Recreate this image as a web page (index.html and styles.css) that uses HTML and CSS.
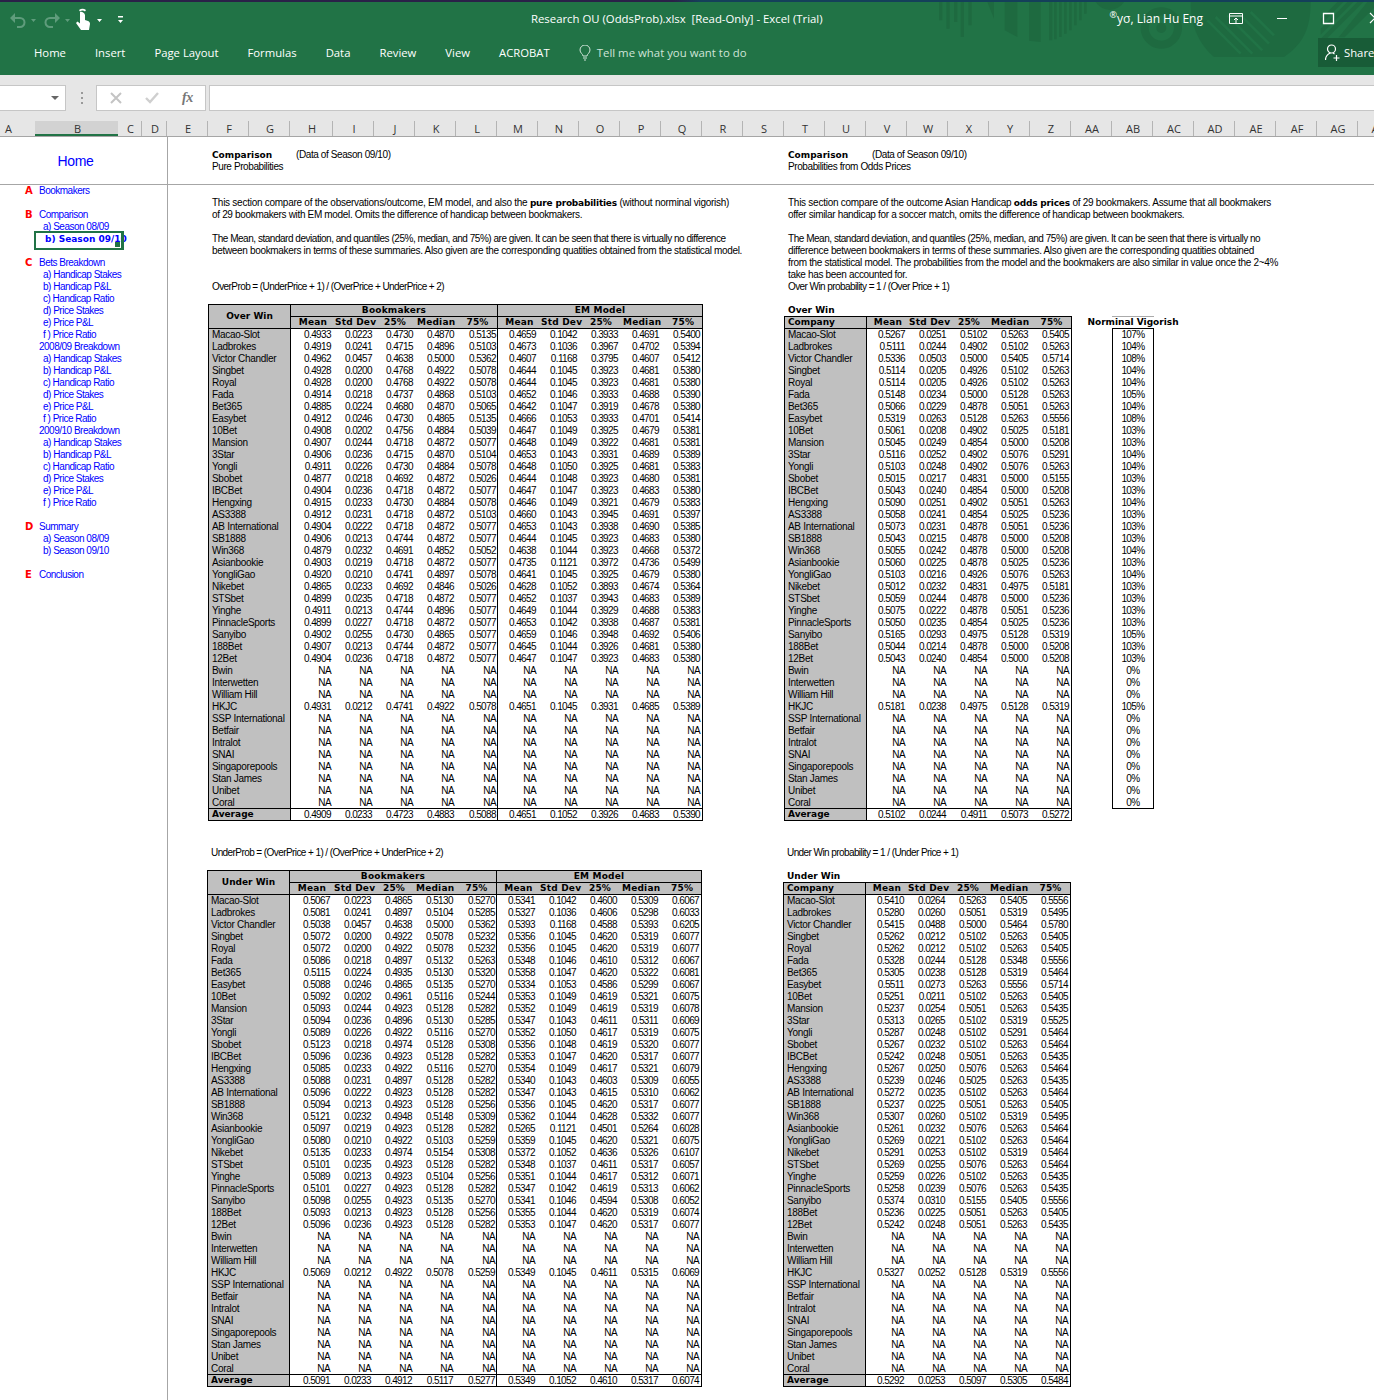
FILE: index.html
```html
<!DOCTYPE html>
<html lang="en">
<head>
    <meta charset="UTF-8">
    <meta name="viewport" content="width=device-width, initial-scale=1.0">
    <title>Research OU (OddsProb).xlsx - Excel</title>
    <link rel="stylesheet" href="styles.css">
</head>
<body>
    <header class="ribbon">
        <svg class="ribbon-art" width="460" height="75" viewBox="0 0 1380 225" fill="#1e6a40">
            <path d="M75 0h10v55H75zM97 0h10v80H97zM120 0h10v60h-10zM140 0h10v105h-10zM163 0h10v70h-10zM220 0h20v50zM272 0h38v105l-38-20zM345 0h35v120l-35-4zM405 0h10v115h-10zM420 0h8v112h-8zM435 0h8v105h-8zM450 0h8v95h-8zM465 0h8v85h-8zM480 0h8v70h-8zM495 0h8v55h-8zM510 0h8v35h-8z"/>
            <path d="M545 0h85a50 50 0 0 1-85 0z"/>
            <path fill-rule="evenodd" d="M742 16a62 62 0 1 1-.1 0zM742 40a38 38 0 1 0 .1 0zM742 63a15 15 0 1 1-.1 0z"/>
            <path d="M830 0h360c0 90-30 130-80 165H900c-40-35-70-85-70-165z"/>
            <path stroke="#217346" stroke-width="8" d="M880 55l100 100M905 45l110 110M940 40l105 105M975 35l90 90M1010 30l70 70"/>
            <path d="M1270 0h18l-68 68V50zM1300 0h18l-98 98V80zM1330 0h18l-128 128v-18zM1360 0h20v18l-88 88h-18z"/>
        </svg>
        <div class="title-row">
            <svg class="qat" width="130" height="35" viewBox="0 0 130 35">
                <g fill="none" stroke="#5f9c7c" stroke-width="2">
                    <path d="M13 16h7a4.500 4.500 0 0 1 0 9h-3"/>
                    <path d="M57 16h-7a4.500 4.500 0 0 0 0 9h3"/>
                </g>
                <path fill="#5f9c7c" d="M10 16l5-5v10zM60 16l-5-5v10zM31 17h5l-2.500 3zM65 17h5l-2.500 3z"/>
                <path fill="#fff" d="M80 10a4 4 0 0 1 5 3v5l3 1c1.500.5 2 1.500 2 3l-1 6h-8l-5-7 1.500-1.500 2.500 2zM79 8a6 6 0 0 1 7 0l-1 1.500a4 4 0 0 0-5 0z"/>
                <path fill="#fff" d="M97 17h5l-2.500 3zM118 14h5v1.500h-5zM118 18h5l-2.500 3z"/>
            </svg>
            <span class="doc-title">Research OU (OddsProb).xlsx &nbsp;[Read-Only] - Excel (Trial)</span>
            <div class="account">
                <span class="user"><sup>®</sup>yσ, Lian Hu Eng</span>
                <svg width="145" height="35" viewBox="0 0 145 35" fill="none" stroke="#fff">
                    <path d="M.5 11.500h13v10H.5zM.5 14h13M7 21v-5M5 18l2-2 2 2"/>
                    <path d="M48 16.500h10"/>
                    <path stroke-width="1.300" d="M94.500 11.500h10v10h-10z"/>
                    <path stroke-width="1.200" d="M141 11l5 5-5 5"/>
                </svg>
            </div>
        </div>
        <nav class="tab-row">
            <span class="tab">Home</span>
            <span class="tab">Insert</span>
            <span class="tab">Page Layout</span>
            <span class="tab">Formulas</span>
            <span class="tab">Data</span>
            <span class="tab">Review</span>
            <span class="tab">View</span>
            <span class="tab">ACROBAT</span>
            <span class="tell-me">
                <svg width="12" height="16" viewBox="0 0 12 16" fill="none" stroke="#cfe4d8">
                    <path d="M4 11c0-2-3-3-3-6a5 5 0 0 1 10 0c0 3-3 4-3 6zM4 13h4M5 15h2"/>
                </svg>
                Tell me what you want to do
            </span>
            <span class="share">
                <svg width="15" height="17" viewBox="0 0 15 17" fill="none" stroke="#fff" stroke-width="1.200">
                    <circle cx="6.500" cy="5" r="4"/>
                    <path d="M.5 16c0-4 2.500-6 5-7M8 9l1.500 1M8.500 14h6M11.500 11v6"/>
                </svg>
                Share
            </span>
        </nav>
    </header>

    <div class="formula-bar">
        <div class="name-box"><i class="caret"></i></div>
        <div class="grip"><i></i><i></i><i></i></div>
        <div class="fx-box">
            <svg width="12" height="12" viewBox="0 0 12 12" fill="none" stroke="#c4c4c4" stroke-width="2"><path d="M1 1l10 10M11 1L1 11"/></svg>
            <svg width="14" height="12" viewBox="0 0 14 12" fill="none" stroke="#cfcfcf" stroke-width="2.400"><path d="M1 6l4 4 8-9"/></svg>
            <span class="fx">fx</span>
        </div>
        <div class="formula-input"></div>
    </div>

    <div class="col-heads">
        <span class="col-a">A</span><span class="col-b">B</span><span class="col-c">C</span><span class="col-d">D</span><span>E</span><span>F</span><span>G</span><span class="col-h">H</span><span>I</span><span>J</span><span>K</span><span>L</span><span>M</span><span>N</span><span>O</span><span>P</span><span>Q</span><span>R</span><span>S</span><span>T</span><span>U</span><span>V</span><span>W</span><span>X</span><span>Y</span><span>Z</span><span>AA</span><span>AB</span><span>AC</span><span>AD</span><span>AE</span><span>AF</span><span>AG</span><span>AH</span>
    </div>

    <main class="sheet">
        <div class="home-pane"><a class="home-link">Home</a></div>

        <div class="top-pane">
            <div class="sec-left">
                <div class="line"><b class="heading">Comparison</b>(Data of Season 09/10)</div>
                <div class="line">Pure Probabilities</div>
            </div>
            <div class="sec-right">
                <div class="line"><b class="heading">Comparison</b>(Data of Season 09/10)</div>
                <div class="line">Probabilities from Odds Prices</div>
            </div>
        </div>

        <aside class="nav-pane">
            <div class="nav-row"><b class="letter">A</b><a>Bookmakers</a></div>
            <div class="nav-row"></div>
            <div class="nav-row"><b class="letter">B</b><a>Comparison</a></div>
            <div class="nav-row sub"><a>a) Season 08/09</a></div>
            <div class="nav-row sub selected"><a>b) Season 09/10</a></div>
            <div class="nav-row"></div>
            <div class="nav-row"><b class="letter">C</b><a>Bets Breakdown</a></div>
            <div class="nav-row sub"><a>a) Handicap Stakes</a></div>
            <div class="nav-row sub"><a>b) Handicap P&amp;L</a></div>
            <div class="nav-row sub"><a>c) Handicap Ratio</a></div>
            <div class="nav-row sub"><a>d) Price Stakes</a></div>
            <div class="nav-row sub"><a>e) Price P&amp;L</a></div>
            <div class="nav-row sub"><a>f ) Price Ratio</a></div>
            <div class="nav-row year"><a>2008/09 Breakdown</a></div>
            <div class="nav-row sub"><a>a) Handicap Stakes</a></div>
            <div class="nav-row sub"><a>b) Handicap P&amp;L</a></div>
            <div class="nav-row sub"><a>c) Handicap Ratio</a></div>
            <div class="nav-row sub"><a>d) Price Stakes</a></div>
            <div class="nav-row sub"><a>e) Price P&amp;L</a></div>
            <div class="nav-row sub"><a>f ) Price Ratio</a></div>
            <div class="nav-row year"><a>2009/10 Breakdown</a></div>
            <div class="nav-row sub"><a>a) Handicap Stakes</a></div>
            <div class="nav-row sub"><a>b) Handicap P&amp;L</a></div>
            <div class="nav-row sub"><a>c) Handicap Ratio</a></div>
            <div class="nav-row sub"><a>d) Price Stakes</a></div>
            <div class="nav-row sub"><a>e) Price P&amp;L</a></div>
            <div class="nav-row sub"><a>f ) Price Ratio</a></div>
            <div class="nav-row"></div>
            <div class="nav-row"><b class="letter">D</b><a>Summary</a></div>
            <div class="nav-row sub"><a>a) Season 08/09</a></div>
            <div class="nav-row sub"><a>b) Season 09/10</a></div>
            <div class="nav-row"></div>
            <div class="nav-row"><b class="letter">E</b><a>Conclusion</a></div>
        </aside>

        <div class="main-pane">
            <section class="sec-left">
                <div class="intro">
                    <div class="line loose">This section compare of the observations/outcome, EM model, and also the <b>pure probabilities</b> (without norminal vigorish)</div>
                    <div class="line">of 29 bookmakers with EM model. Omits the difference of handicap between bookmakers.</div>
                    <div class="line"></div>
                    <div class="line tight">The Mean, standard deviation, and quantiles (25%, median, and 75%) are given. It can be seen that there is virtually no difference</div>
                    <div class="line">between bookmakers in terms of these summaries. Also given are the corresponding quatities obtained from the statistical model.</div>
                    <div class="line"></div>
                    <div class="line"></div>
                    <div class="line formula">OverProb = (UnderPrice + 1) / (OverPrice + UnderPrice + 2)</div>
                </div>
                <table class="data-table wide" id="overPure"></table>
                <div class="lower">
                    <div class="line formula">UnderProb = (OverPrice + 1) / (OverPrice + UnderPrice + 2)</div>
                    <table class="data-table wide" id="underPure"></table>
                </div>
            </section>

            <section class="sec-right">
                <div class="intro">
                    <div class="line loose">This section compare of the outcome Asian Handicap <b>odds prices</b> of 29 bookmakers. Assume that all bookmakers</div>
                    <div class="line">offer similar handicap for a soccer match, omits the difference of handicap between bookmakers.</div>
                    <div class="line"></div>
                    <div class="line tight">The Mean, standard deviation, and quantiles (25%, median, and 75%) are given. It can be seen that there is virtually no</div>
                    <div class="line">difference between bookmakers in terms of these summaries. Also given are the corresponding quatities obtained</div>
                    <div class="line">from the statistical model. The probabilities from the model and the bookmakers are also similar in value once the 2~4%</div>
                    <div class="line">take has been accounted for.</div>
                    <div class="line formula">Over Win probability = 1 / (Over Price + 1)</div>
                </div>
                <h3 class="table-title">Over Win</h3>
                <div class="table-row">
                    <table class="data-table narrow" id="overOdds"></table>
                    <div class="vig">
                        <div class="vig-head"><b>Norminal Vigorish</b></div>
                        <div class="vig-body" id="vigBody"></div>
                    </div>
                </div>
                <div class="lower">
                    <div class="line formula">Under Win probability = 1 / (Under Price + 1)</div>
                    <h3 class="table-title">Under Win</h3>
                    <table class="data-table narrow" id="underOdds"></table>
                </div>
            </section>
        </div>
    </main>

    <script src="tables.js"></script>
</body>
</html>
```

FILE: styles.css
```css
* {
    box-sizing: border-box;
}
body {
    margin: 0;
    width: 1374px;
    height: 1400px;
    overflow: hidden;
    background-color: #fff;
    color: #000;
    font-family: "Liberation Sans", Arial, sans-serif;
    font-size: 10px;
    letter-spacing: -0.5px;
}

/* title bar and tabs */
.ribbon {
    position: relative;
    height: 75px;
    overflow: hidden;
    background-color: #217346;
    border-top: 2px solid;
    border-image: linear-gradient(90deg, #2a2048 0, #2a2048 49%, #14405a 51%, #14405a 100%) 1;
    color: #fff;
    font-family: "Open Sans", sans-serif;
    font-size: 11.3px;
    letter-spacing: 0;
}
.ribbon-art {
    position: absolute;
    left: 914px;
    top: 0;
}
.title-row {
    position: relative;
    display: flex;
    height: 36px;
    align-items: flex-start;
}
.doc-title {
    margin-left: 401px;
    font-size: 11.35px;
    line-height: 33px;
    white-space: nowrap;
}
.account {
    margin-left: auto;
    display: flex;
    align-items: flex-start;
    gap: 26px;
}
.user {
    font-size: 12px;
    line-height: 33px;
    white-space: nowrap;
}
.user sup {
    font-size: 9px;
    line-height: 0;
}
.tab-row {
    position: relative;
    display: flex;
    height: 29px;
    align-items: center;
    padding-left: 34px;
    gap: 29px;
}
.tab {
    white-space: nowrap;
}
.tell-me {
    display: flex;
    align-items: center;
    gap: 6px;
    color: #cfe4d8;
    font-size: 11.4px;
    white-space: nowrap;
}
.share {
    display: flex;
    align-items: center;
    gap: 4px;
    margin-left: auto;
    width: 56px;
    height: 29px;
    flex-shrink: 0;
    overflow: hidden;
    padding-left: 7px;
    background-color: #185c37;
}
.share svg {
    flex-shrink: 0;
}

/* formula bar */
.formula-bar {
    display: flex;
    height: 46px;
    padding-top: 10px;
    align-items: flex-start;
    background-color: #e6e6e6;
}
.name-box, .fx-box, .formula-input {
    height: 26px;
    background-color: #fff;
    border: 1px solid #c6c6c6;
}
.name-box {
    position: relative;
    width: 66px;
    border-left: none;
}
.caret {
    position: absolute;
    left: 51px;
    top: 10px;
    border: 4px solid transparent;
    border-top-color: #666;
}
.grip {
    display: flex;
    flex-direction: column;
    width: 30px;
    height: 26px;
    padding: 7px 0 0 15px;
    gap: 3px;
}
.grip i {
    width: 2px;
    height: 2px;
    background-color: #999;
}
.fx-box {
    display: flex;
    align-items: center;
    width: 110px;
    padding-left: 13px;
}
.fx-box svg + svg {
    margin-left: 23px;
}
.fx {
    margin-left: 23px;
    color: #777;
    font-family: "Liberation Serif", serif;
    font-size: 14px;
    font-style: italic;
    font-weight: bold;
}
.formula-input {
    flex: 1;
    margin-left: 3px;
    border-right: none;
}

/* column letters */
.col-heads {
    display: flex;
    height: 16px;
    overflow: hidden;
    background-color: #e6e6e6;
    border-bottom: 1px solid #a6a6a6;
    color: #333;
    font-family: "Open Sans", sans-serif;
    font-size: 11px;
    letter-spacing: 0;
    line-height: 15px;
}
.col-heads span {
    flex: 0 0 41px;
    padding-left: 2px;
    text-align: center;
    border-right: 1px solid #b4b4b4;
}
.col-heads .col-a {
    flex-basis: 35px;
    padding-left: 5px;
    text-align: left;
    border-right: none;
}
.col-heads .col-b {
    flex-basis: 83px;
    height: 15px;
    background-color: #d2d2d2;
    border-bottom: 2px solid #217346;
    border-right: none;
}
.col-heads .col-c {
    flex-basis: 24px;
}
.col-heads .col-d {
    flex-basis: 25px;
}
.col-heads .col-h {
    flex-basis: 43px;
}

/* sheet panes */
.sheet {
    display: grid;
    grid-template-columns: 168px 1fr;
    grid-template-rows: 48px 1fr;
}
.home-pane {
    padding-left: 34px;
    width: 168px;
    border-right: 1px solid #a6a6a6;
    border-bottom: 1px solid #a6a6a6;
}
.home-link {
    display: block;
    width: 83px;
    color: #0000ff;
    font-size: 14px;
    letter-spacing: -0.3px;
    line-height: 48px;
    text-align: center;
}
.top-pane {
    display: grid;
    grid-template-columns: 616px 1fr;
    padding-top: 12px;
    border-bottom: 1px solid #a6a6a6;
}
.top-pane .line {
    letter-spacing: -0.4px;
}
.heading {
    display: inline-block;
    width: 84px;
}
b {
    font-family: "DejaVu Sans", sans-serif;
    font-size: 9px;
    letter-spacing: 0;
}
.line {
    height: 12px;
    line-height: 12px;
    letter-spacing: -0.33px;
    white-space: nowrap;
}
.intro .line b {
    letter-spacing: -0.2px;
}
.line.loose {
    letter-spacing: -0.26px;
}
.line.tight {
    letter-spacing: -0.47px;
}
.line.formula {
    letter-spacing: -0.58px;
}
.nav-pane {
    height: 1215px;
    border-right: 1px solid #a6a6a6;
}
.nav-row {
    position: relative;
    display: flex;
    height: 12px;
    padding-left: 25px;
    line-height: 12px;
    white-space: nowrap;
    color: #0000ff;
}
.nav-row.sub {
    padding-left: 43px;
}
.nav-row.year {
    padding-left: 39px;
}
.letter {
    width: 14px;
    color: #ff0000;
    font-size: 10px;
}
.nav-row.selected {
    padding-left: 45px;
    font-family: "DejaVu Sans", sans-serif;
    font-size: 9px;
    font-weight: bold;
    letter-spacing: 0;
}
.nav-row.selected::after {
    content: "";
    position: absolute;
    left: 34px;
    top: -2px;
    width: 85px;
    height: 15px;
    border: 2px solid #217346;
    border-right-width: 3px;
}
.nav-row.selected::before {
    content: "";
    position: absolute;
    z-index: 1;
    left: 115px;
    top: 9px;
    width: 5px;
    height: 5px;
    background-color: #217346;
}
.main-pane {
    display: grid;
    grid-template-columns: 616px 1fr;
    align-items: start;
}
.sec-left {
    padding-left: 40px;
}
.sec-right {
    padding-left: 0;
}
.sec-left .line, .sec-right .line {
    padding-left: 4px;
}
.intro {
    padding-top: 12px;
}
.lower {
    margin-left: -1px;
    padding-top: 26px;
}

/* tables */
.data-table {
    table-layout: fixed;
    border-collapse: separate;
    border-spacing: 0;
    border: 1px solid #000;
    line-height: 11px;
    letter-spacing: -0.6px;
}
.data-table.wide {
    width: 495px;
    margin-top: 11px;
}
.data-table.narrow {
    width: 288px;
}
.data-table th, .data-table td {
    height: 12px;
    padding: 0;
    white-space: nowrap;
    overflow: visible;
}
.data-table th {
    padding-left: 3px;
    background-color: #c0c0c0;
    font-family: "DejaVu Sans", sans-serif;
    font-size: 9px;
    font-weight: bold;
    letter-spacing: 0.2px;
    text-align: center;
    border-bottom: 1px solid #000;
}
.data-table th.group {
    padding-left: 0;
}
.data-table th.name-head {
    padding-left: 0;
    letter-spacing: 0;
    border-right: 1px solid #000;
}
.data-table th.company {
    padding-left: 3px;
    text-align: left;
}
.data-table td {
    padding-right: 1px;
    text-align: right;
    vertical-align: top;
}
.data-table td.name {
    padding: 0 0 0 3px;
    background-color: #c0c0c0;
    text-align: left;
    letter-spacing: -0.3px;
    border-right: 1px solid #000;
}
.data-table td.em, .data-table td.last {
    padding-right: 2px;
}
.data-table .split {
    border-right: 1px solid #000;
}
.data-table tr.final-row td {
    border-bottom: 1px solid #000;
}
.data-table tr.avg-row td {
    height: 11px;
}
.data-table tr.avg-row td.name {
    font-family: "DejaVu Sans", sans-serif;
    font-size: 9px;
    font-weight: bold;
    letter-spacing: 0;
}
.table-title {
    height: 11px;
    margin: 12px 0 0;
    padding-left: 4px;
    font-family: "DejaVu Sans", sans-serif;
    font-size: 9px;
    font-weight: bold;
    letter-spacing: 0;
    line-height: 11px;
}
.table-row {
    display: flex;
    align-items: flex-start;
}
.vig {
    width: 42px;
    margin-left: 40px;
}
.vig-head {
    display: flex;
    justify-content: center;
    height: 12px;
    border-top: 1px solid #aaa;
    line-height: 11px;
    white-space: nowrap;
}
.vig-body {
    height: 481px;
    overflow: hidden;
    border: 1px solid #000;
    letter-spacing: -0.6px;
}
.vig-body div {
    height: 12px;
    line-height: 11px;
    text-align: center;
}
```

FILE: tables.js
```js
// Sheet data. Rows follow the order of NAMES, skipping the NA bookmakers.
const NAMES = ['Macao-Slot', 'Ladbrokes', 'Victor Chandler', 'Singbet', 'Royal', 'Fada', 'Bet365', 'Easybet', '10Bet', 'Mansion',
    '3Star', 'Yongli', 'Sbobet', 'IBCBet', 'Hengxing', 'AS3388', 'AB International', 'SB1888', 'Win368', 'Asianbookie',
    'YongliGao', 'Nikebet', 'STSbet', 'Yinghe', 'PinnacleSports', 'Sanyibo', '188Bet', '12Bet', 'Bwin', 'Interwetten',
    'William Hill', 'HKJC', 'SSP International', 'Betfair', 'Intralot', 'SNAI', 'Singaporepools', 'Stan James', 'Unibet', 'Coral'];
const NO_DATA = ['Bwin', 'Interwetten', 'William Hill', 'SSP International', 'Betfair', 'Intralot', 'SNAI', 'Singaporepools', 'Stan James', 'Unibet', 'Coral'];
const COLS = ['Mean', 'Std Dev', '25%', 'Median', '75%'];

const overPure = `0.4933 0.0223 0.4730 0.4870 0.5135 0.4659 0.1042 0.3933 0.4691 0.5400
0.4919 0.0241 0.4715 0.4896 0.5103 0.4673 0.1036 0.3967 0.4702 0.5394
0.4962 0.0457 0.4638 0.5000 0.5362 0.4607 0.1168 0.3795 0.4607 0.5412
0.4928 0.0200 0.4768 0.4922 0.5078 0.4644 0.1045 0.3923 0.4681 0.5380
0.4928 0.0200 0.4768 0.4922 0.5078 0.4644 0.1045 0.3923 0.4681 0.5380
0.4914 0.0218 0.4737 0.4868 0.5103 0.4652 0.1046 0.3933 0.4688 0.5390
0.4885 0.0224 0.4680 0.4870 0.5065 0.4642 0.1047 0.3919 0.4678 0.5380
0.4912 0.0246 0.4730 0.4865 0.5135 0.4666 0.1053 0.3933 0.4701 0.5414
0.4908 0.0202 0.4756 0.4884 0.5039 0.4647 0.1049 0.3925 0.4679 0.5381
0.4907 0.0244 0.4718 0.4872 0.5077 0.4648 0.1049 0.3922 0.4681 0.5381
0.4906 0.0236 0.4715 0.4870 0.5104 0.4653 0.1043 0.3931 0.4689 0.5389
0.4911 0.0226 0.4730 0.4884 0.5078 0.4648 0.1050 0.3925 0.4681 0.5383
0.4877 0.0218 0.4692 0.4872 0.5026 0.4644 0.1048 0.3923 0.4680 0.5381
0.4904 0.0236 0.4718 0.4872 0.5077 0.4647 0.1047 0.3923 0.4683 0.5380
0.4915 0.0233 0.4730 0.4884 0.5078 0.4646 0.1049 0.3921 0.4679 0.5383
0.4912 0.0231 0.4718 0.4872 0.5103 0.4660 0.1043 0.3945 0.4691 0.5397
0.4904 0.0222 0.4718 0.4872 0.5077 0.4653 0.1043 0.3938 0.4690 0.5385
0.4906 0.0213 0.4744 0.4872 0.5077 0.4644 0.1045 0.3923 0.4683 0.5380
0.4879 0.0232 0.4691 0.4852 0.5052 0.4638 0.1044 0.3923 0.4668 0.5372
0.4903 0.0219 0.4718 0.4872 0.5077 0.4735 0.1121 0.3972 0.4736 0.5499
0.4920 0.0210 0.4741 0.4897 0.5078 0.4641 0.1045 0.3925 0.4679 0.5380
0.4865 0.0233 0.4692 0.4846 0.5026 0.4628 0.1052 0.3893 0.4674 0.5364
0.4899 0.0235 0.4718 0.4872 0.5077 0.4652 0.1037 0.3943 0.4683 0.5389
0.4911 0.0213 0.4744 0.4896 0.5077 0.4649 0.1044 0.3929 0.4688 0.5383
0.4899 0.0227 0.4718 0.4872 0.5077 0.4653 0.1042 0.3938 0.4687 0.5381
0.4902 0.0255 0.4730 0.4865 0.5077 0.4659 0.1046 0.3948 0.4692 0.5406
0.4907 0.0213 0.4744 0.4872 0.5077 0.4645 0.1044 0.3926 0.4681 0.5380
0.4904 0.0236 0.4718 0.4872 0.5077 0.4647 0.1047 0.3923 0.4683 0.5380
0.4931 0.0212 0.4741 0.4922 0.5078 0.4651 0.1045 0.3931 0.4685 0.5389
0.4909 0.0233 0.4723 0.4883 0.5088 0.4651 0.1052 0.3926 0.4683 0.5390`;

const underPure = `0.5067 0.0223 0.4865 0.5130 0.5270 0.5341 0.1042 0.4600 0.5309 0.6067
0.5081 0.0241 0.4897 0.5104 0.5285 0.5327 0.1036 0.4606 0.5298 0.6033
0.5038 0.0457 0.4638 0.5000 0.5362 0.5393 0.1168 0.4588 0.5393 0.6205
0.5072 0.0200 0.4922 0.5078 0.5232 0.5356 0.1045 0.4620 0.5319 0.6077
0.5072 0.0200 0.4922 0.5078 0.5232 0.5356 0.1045 0.4620 0.5319 0.6077
0.5086 0.0218 0.4897 0.5132 0.5263 0.5348 0.1046 0.4610 0.5312 0.6067
0.5115 0.0224 0.4935 0.5130 0.5320 0.5358 0.1047 0.4620 0.5322 0.6081
0.5088 0.0246 0.4865 0.5135 0.5270 0.5334 0.1053 0.4586 0.5299 0.6067
0.5092 0.0202 0.4961 0.5116 0.5244 0.5353 0.1049 0.4619 0.5321 0.6075
0.5093 0.0244 0.4923 0.5128 0.5282 0.5352 0.1049 0.4619 0.5319 0.6078
0.5094 0.0236 0.4896 0.5130 0.5285 0.5347 0.1043 0.4611 0.5311 0.6069
0.5089 0.0226 0.4922 0.5116 0.5270 0.5352 0.1050 0.4617 0.5319 0.6075
0.5123 0.0218 0.4974 0.5128 0.5308 0.5356 0.1048 0.4619 0.5320 0.6077
0.5096 0.0236 0.4923 0.5128 0.5282 0.5353 0.1047 0.4620 0.5317 0.6077
0.5085 0.0233 0.4922 0.5116 0.5270 0.5354 0.1049 0.4617 0.5321 0.6079
0.5088 0.0231 0.4897 0.5128 0.5282 0.5340 0.1043 0.4603 0.5309 0.6055
0.5096 0.0222 0.4923 0.5128 0.5282 0.5347 0.1043 0.4615 0.5310 0.6062
0.5094 0.0213 0.4923 0.5128 0.5256 0.5356 0.1045 0.4620 0.5317 0.6077
0.5121 0.0232 0.4948 0.5148 0.5309 0.5362 0.1044 0.4628 0.5332 0.6077
0.5097 0.0219 0.4923 0.5128 0.5282 0.5265 0.1121 0.4501 0.5264 0.6028
0.5080 0.0210 0.4922 0.5103 0.5259 0.5359 0.1045 0.4620 0.5321 0.6075
0.5135 0.0233 0.4974 0.5154 0.5308 0.5372 0.1052 0.4636 0.5326 0.6107
0.5101 0.0235 0.4923 0.5128 0.5282 0.5348 0.1037 0.4611 0.5317 0.6057
0.5089 0.0213 0.4923 0.5104 0.5256 0.5351 0.1044 0.4617 0.5312 0.6071
0.5101 0.0227 0.4923 0.5128 0.5282 0.5347 0.1042 0.4619 0.5313 0.6062
0.5098 0.0255 0.4923 0.5135 0.5270 0.5341 0.1046 0.4594 0.5308 0.6052
0.5093 0.0213 0.4923 0.5128 0.5256 0.5355 0.1044 0.4620 0.5319 0.6074
0.5096 0.0236 0.4923 0.5128 0.5282 0.5353 0.1047 0.4620 0.5317 0.6077
0.5069 0.0212 0.4922 0.5078 0.5259 0.5349 0.1045 0.4611 0.5315 0.6069
0.5091 0.0233 0.4912 0.5117 0.5277 0.5349 0.1052 0.4610 0.5317 0.6074`;

const overOdds = `0.5267 0.0251 0.5102 0.5263 0.5405
0.5111 0.0244 0.4902 0.5102 0.5263
0.5336 0.0503 0.5000 0.5405 0.5714
0.5114 0.0205 0.4926 0.5102 0.5263
0.5114 0.0205 0.4926 0.5102 0.5263
0.5148 0.0234 0.5000 0.5128 0.5263
0.5066 0.0229 0.4878 0.5051 0.5263
0.5319 0.0263 0.5128 0.5263 0.5556
0.5061 0.0208 0.4902 0.5025 0.5181
0.5045 0.0249 0.4854 0.5000 0.5208
0.5116 0.0252 0.4902 0.5076 0.5291
0.5103 0.0248 0.4902 0.5076 0.5263
0.5015 0.0217 0.4831 0.5000 0.5155
0.5043 0.0240 0.4854 0.5000 0.5208
0.5090 0.0251 0.4902 0.5051 0.5263
0.5058 0.0241 0.4854 0.5025 0.5236
0.5073 0.0231 0.4878 0.5051 0.5236
0.5043 0.0215 0.4878 0.5000 0.5208
0.5055 0.0242 0.4878 0.5000 0.5208
0.5060 0.0225 0.4878 0.5025 0.5236
0.5103 0.0216 0.4926 0.5076 0.5263
0.5012 0.0232 0.4831 0.4975 0.5181
0.5059 0.0244 0.4878 0.5000 0.5236
0.5075 0.0222 0.4878 0.5051 0.5236
0.5050 0.0235 0.4854 0.5025 0.5236
0.5165 0.0293 0.4975 0.5128 0.5319
0.5044 0.0214 0.4878 0.5000 0.5208
0.5043 0.0240 0.4854 0.5000 0.5208
0.5181 0.0238 0.4975 0.5128 0.5319
0.5102 0.0244 0.4911 0.5073 0.5272`;

const underOdds = `0.5410 0.0264 0.5263 0.5405 0.5556
0.5280 0.0260 0.5051 0.5319 0.5495
0.5415 0.0488 0.5000 0.5464 0.5780
0.5262 0.0212 0.5102 0.5263 0.5405
0.5262 0.0212 0.5102 0.5263 0.5405
0.5328 0.0244 0.5128 0.5348 0.5556
0.5305 0.0238 0.5128 0.5319 0.5464
0.5511 0.0273 0.5263 0.5556 0.5714
0.5251 0.0211 0.5102 0.5263 0.5405
0.5237 0.0254 0.5051 0.5263 0.5435
0.5313 0.0265 0.5102 0.5319 0.5525
0.5287 0.0248 0.5102 0.5291 0.5464
0.5267 0.0232 0.5102 0.5263 0.5464
0.5242 0.0248 0.5051 0.5263 0.5435
0.5267 0.0250 0.5076 0.5263 0.5464
0.5239 0.0246 0.5025 0.5263 0.5435
0.5272 0.0235 0.5102 0.5263 0.5464
0.5237 0.0225 0.5051 0.5263 0.5405
0.5307 0.0260 0.5102 0.5319 0.5495
0.5261 0.0232 0.5076 0.5263 0.5464
0.5269 0.0221 0.5102 0.5263 0.5464
0.5291 0.0253 0.5102 0.5319 0.5464
0.5269 0.0255 0.5076 0.5263 0.5464
0.5259 0.0226 0.5102 0.5263 0.5435
0.5258 0.0239 0.5076 0.5263 0.5435
0.5374 0.0310 0.5155 0.5405 0.5556
0.5236 0.0225 0.5051 0.5263 0.5405
0.5242 0.0248 0.5051 0.5263 0.5435
0.5327 0.0252 0.5128 0.5319 0.5556
0.5292 0.0253 0.5097 0.5305 0.5484`;

const vigorish = [107, 104, 108, 104, 104, 105, 104, 108, 103, 103, 104, 104, 103, 103, 104, 103, 103, 103, 104, 103, 104, 103, 103, 103, 103, 105, 103, 103, 105];

function colgroup(widths) {
    return '<colgroup>' + widths.map(w => `<col style="width:${w}px">`).join('') + '</colgroup>';
}

function numCells(values, wide) {
    return values.map((v, i) => {
        let cls = '';
        if (wide && i >= 5) cls = 'em';
        if (wide && i === 4) cls = 'split';
        if (!wide && i === 4) cls = 'last';
        return `<td class="${cls}">${v}</td>`;
    }).join('');
}

function bodyRows(text, wide) {
    const lines = text.split('\n');
    const average = lines.pop().split(' ');
    const cellCount = wide ? 10 : 5;
    let html = '<tbody>';
    let next = 0;
    NAMES.forEach((name, i) => {
        const noData = NO_DATA.includes(name);
        const values = noData ? new Array(cellCount).fill('NA') : lines[next++].split(' ');
        const cls = i === NAMES.length - 1 ? ' class="final-row"' : '';
        html += `<tr${cls}><td class="name">${name}</td>${numCells(values, wide)}</tr>`;
    });
    html += `<tr class="avg-row"><td class="name">Average</td>${numCells(average, wide)}</tr>`;
    return html + '</tbody>';
}

function buildWide(id, label, text) {
    const heads = COLS.map((c, i) => `<th${i === 4 ? ' class="split"' : ''}>${c}</th>`).join('') + COLS.map(c => `<th>${c}</th>`).join('');
    document.getElementById(id).innerHTML = colgroup([82, 41, 41, 41, 41, 43, 40, 41, 41, 41, 41]) +
        `<thead><tr><th class="name-head" rowspan="2">${label}</th><th class="group split" colspan="5">Bookmakers</th><th class="group" colspan="5">EM Model</th></tr>` +
        `<tr>${heads}</tr></thead>` + bodyRows(text, true);
}

function buildNarrow(id, text) {
    const heads = COLS.map(c => `<th>${c}</th>`).join('');
    document.getElementById(id).innerHTML = colgroup([82, 39, 41, 41, 41, 42]) +
        `<thead><tr><th class="name-head company">Company</th>${heads}</tr></thead>` + bodyRows(text, false);
}

function buildVigorish() {
    let next = 0;
    document.getElementById('vigBody').innerHTML = NAMES.map(name => {
        const pct = NO_DATA.includes(name) ? 0 : vigorish[next++];
        return `<div>${pct}%</div>`;
    }).join('');
}

buildWide('overPure', 'Over Win', overPure);
buildWide('underPure', 'Under Win', underPure);
buildNarrow('overOdds', overOdds);
buildNarrow('underOdds', underOdds);
buildVigorish();
```
